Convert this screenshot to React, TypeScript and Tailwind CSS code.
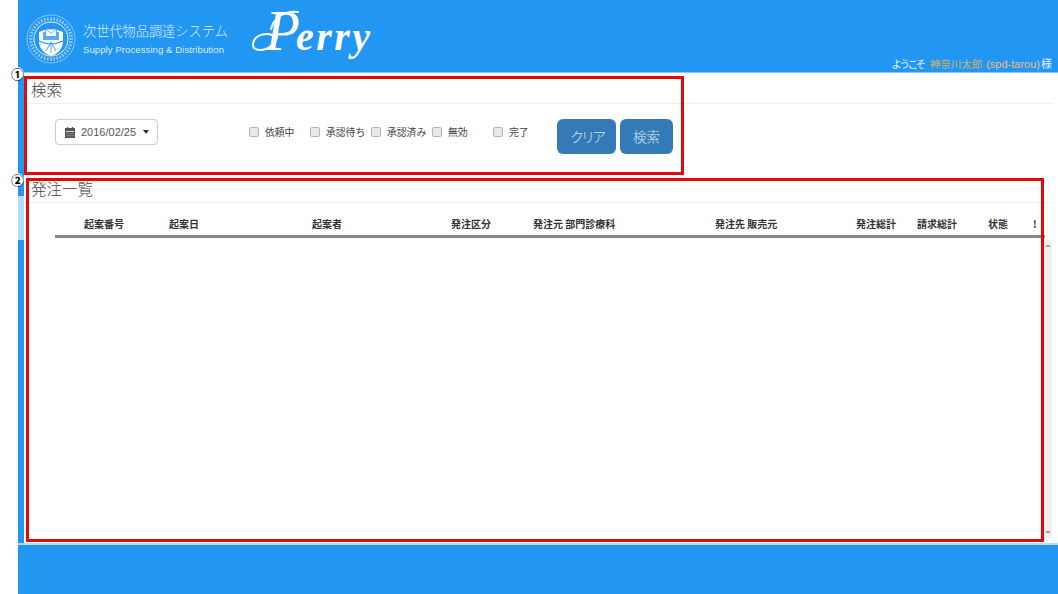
const jp = "font-['Noto_Sans_CJK_JP','Liberation_Sans',sans-serif]"

const statuses = ['依頼中', '承認待ち', '承認済み', '無効', '完了']

const columns = [
  { label: '起案番号', className: 'pl-[29px]' },
  { label: '起案日', className: '' },
  { label: '起案者', className: '' },
  { label: '発注区分', className: '' },
  { label: '発注元 部門診療科', className: '' },
  { label: '発注先 販売元', className: '' },
  { label: '発注総計', className: '' },
  { label: '請求総計', className: '' },
  { label: '状態', className: '' },
  { label: '!', className: '' },
]

function Crest() {
  const ticks = Array.from({ length: 40 }, (_, i) => i * 9)
  return (
    <svg width="50" height="50" viewBox="0 0 50 50" className="shrink-0">
      <circle cx="25" cy="25" r="24" fill="none" stroke="#cfe6fb" strokeWidth="0.6" />
      <g stroke="#d5e9fb" opacity="0.65">
        {ticks.map((deg) => (
          <line key={deg} x1="25" y1="3" x2="25" y2="6.5" strokeWidth="1.6" transform={`rotate(${deg} 25 25)`} />
        ))}
      </g>
      <circle cx="25" cy="25" r="17" fill="none" stroke="#e6f2fd" strokeWidth="1" />
      <path d="M13 18 Q25 12 37 18 L37 29 Q36 38 25 42 Q14 38 13 29 Z" fill="#ffffff" />
      <path d="M17 18 L33 18 L33 26 L17 26 Z" fill="#5aaef0" />
      <rect x="19.5" y="15" width="11" height="7.5" fill="#ffffff" stroke="#2196f3" strokeWidth="0.7" />
      <path d="M19.5 15 L25 19.5 L30.5 15" fill="none" stroke="#2196f3" strokeWidth="0.7" />
      <path d="M13 27 Q25 33 37 27" fill="none" stroke="#2196f3" strokeWidth="1.2" />
      <path d="M25 28 L20 37 M25 28 L30 37 M25 28 L25 39" stroke="#5aaef0" strokeWidth="1.1" />
    </svg>
  )
}

function PerrySwash() {
  return (
    <svg width="60" height="60" viewBox="0 0 60 60" className="absolute left-0 top-0" fill="none">
      <path d="M25 38 C16 30 2 35 1 44 C0 52 14 52 21 44 C24 41 25 39 25 36" stroke="#ffffff" strokeWidth="2" strokeLinecap="round" />
      <path d="M19 29 C22 17 34 10 46 12" stroke="#ffffff" strokeWidth="2" strokeLinecap="round" />
    </svg>
  )
}

function CalendarIcon() {
  return (
    <svg width="10" height="11" viewBox="0 0 10 11" className="shrink-0">
      <rect x="0" y="1" width="10" height="10" fill="#555" />
      <rect x="1" y="4" width="8" height="1" fill="#ddd" />
      <rect x="1" y="6.5" width="8" height="0.7" fill="#999" />
      <rect x="1" y="8.5" width="8" height="0.7" fill="#999" />
      <rect x="2" y="0" width="1.2" height="2" fill="#555" />
      <rect x="6.8" y="0" width="1.2" height="2" fill="#555" />
    </svg>
  )
}

function SectionTitle({ title, height }: { title: string; height: string }) {
  return (
    <div className={`${height} mr-[5px] border-b border-[#eeeeee] pl-[7px] flex items-end pb-[3px]`}>
      <h2 className={`${jp} text-[15.5px] leading-[22px] font-light text-[#444]`}>{title}</h2>
    </div>
  )
}

export default function App() {
  return (
    <div className="relative w-[1058px] h-[594px] overflow-hidden bg-white flex">
      <div className="w-[18px] shrink-0 bg-white" />

      <div className="flex-1 flex flex-col min-w-0">
        <header className="h-[73px] shrink-0 bg-[#2196f3] border-b border-[#8cc6f6] flex relative">
          <div className="pl-[8px] pt-[14px]">
            <Crest />
          </div>
          <div className="pl-[7px] pt-[21px]">
            <div className={`${jp} text-[13.2px] leading-[20px] font-light text-[#dcedfc] whitespace-nowrap`}>
              次世代物品調達システム
            </div>
            <div className="font-['Liberation_Sans',sans-serif] text-[9.5px] leading-[12px] mt-[3px] tracking-[0.1px] text-[#dcedfc] whitespace-nowrap">
              Supply Processing &amp; Distribution
            </div>
          </div>
          <div className="relative ml-[24px] w-[124px] h-[70px] pl-[14px] pt-[3px] flex items-baseline font-['Liberation_Serif',serif] italic text-white">
            <PerrySwash />
            <span className="text-[56px] leading-[56px]">P</span>
            <span className="text-[40px] leading-[40px] font-bold tracking-[2.5px] -ml-[4px]">erry</span>
          </div>
          <div className="ml-auto mr-[6px] self-end pb-[1px] flex items-baseline text-[#e4f1fd] whitespace-nowrap">
            <span className={`${jp} text-[10.5px] leading-[14px] tracking-[-2.4px] mr-[6px]`}>ようこそ</span>
            <span className={`${jp} text-[10.5px] leading-[14px] text-[#d3b25a] mr-[4px]`}>神奈川太郎</span>
            <span className="font-['Liberation_Sans',sans-serif] text-[11px] leading-[14px] text-[#eebb80]">(spd-tarou)</span>
            <span className={`${jp} text-[11px] leading-[14px] ml-[1px]`}>様</span>
          </div>
        </header>

        <div className="flex-1 flex min-h-0">
          <div className="w-[6px] shrink-0 flex flex-col">
            <div className="h-[123px] bg-[#2196f3]" />
            <div className="h-[44px] bg-[#b3dbfb]" />
            <div className="flex-1 bg-[#2196f3]" />
          </div>

          <main className="flex-1 flex flex-col min-w-0">
            <section className="h-[100px] shrink-0">
              <SectionTitle title="検索" height="h-[31px]" />
              <div className="flex items-start pl-[31px] pt-[15px]">
                <button className="w-[103px] h-[26px] rounded-[4px] border border-[#cccccc] bg-white flex items-center pl-[9px] text-[#555]">
                  <CalendarIcon />
                  <span className="font-['Liberation_Sans',sans-serif] text-[11px] ml-[6px]">2016/02/25</span>
                  <span className="ml-[7px] w-0 h-0 border-x-[3.5px] border-x-transparent border-t-[4px] border-t-[#333]" />
                </button>
                <div className="flex ml-[91px] mt-[5px]">
                  {statuses.map((s) => (
                    <label key={s} className="w-[61px] flex items-center h-[16px]">
                      <input
                        type="checkbox"
                        className="appearance-none w-[10px] h-[10px] rounded-[2px] border border-[#b5b5b5] bg-[#e9e9e9] shrink-0"
                      />
                      <span className={`${jp} ml-[6px] text-[9.8px] leading-[14px] text-[#444] whitespace-nowrap`}>{s}</span>
                    </label>
                  ))}
                </div>
                <div className="flex gap-[4px] ml-[3px]">
                  <button className={`${jp} w-[59px] h-[35px] rounded-[6px] bg-[#337ab7] text-[14px] tracking-[-3px] font-light text-[#d5e6f5]`}>クリア</button>
                  <button className={`${jp} w-[53px] h-[35px] rounded-[6px] bg-[#337ab7] text-[13.5px] font-light text-[#d5e6f5]`}>検索</button>
                </div>
              </div>
            </section>

            <section className="flex-1 flex flex-col min-h-0">
              <SectionTitle title="発注一覧" height="h-[30px]" />
              <div className="ml-[31px] mr-[13px] mt-[12px] h-[20px] grid grid-cols-[114px_143px_139px_82px_182px_141px_61px_71px_45px_6px]">
                {columns.map((c) => (
                  <div key={c.label} className={`${jp} ${c.className} text-[10px] leading-[18px] font-bold text-[#333] whitespace-nowrap`}>
                    {c.label}
                  </div>
                ))}
              </div>
              <div className="ml-[31px] mr-[13px] h-[3px] bg-[#888888]" />
              <div className="flex-1 flex justify-end mt-[2px] mb-[5px] mr-[6px]">
                <div className="w-[9px] bg-[#f1f1f1] flex flex-col justify-between items-center py-[4px]">
                  <span className="w-0 h-0 border-x-[3px] border-x-transparent border-b-[3px] border-b-[#a3a3a3]" />
                  <span className="w-0 h-0 border-x-[3px] border-x-transparent border-t-[3px] border-t-[#a3a3a3]" />
                </div>
              </div>
            </section>
          </main>
        </div>

        <footer className="h-[51px] shrink-0 bg-[#2196f3] border-t-2 border-[#b3dbfb]" />
      </div>

      <div className="absolute left-[24px] top-[76px] w-[660px] h-[99px] border-[3px] border-[#e00a0a] pointer-events-none" />
      <div className="absolute left-[26px] top-[178px] w-[1018px] h-[364px] border-[3px] border-[#e00a0a] pointer-events-none" />

      <span className={`${jp} absolute left-[11px] top-[67px] w-[13px] h-[13px] rounded-full bg-white text-[13px] leading-[13px] font-bold text-black text-center`}>①</span>
      <span className={`${jp} absolute left-[11px] top-[173px] w-[13px] h-[13px] rounded-full bg-white text-[13px] leading-[13px] font-bold text-black text-center`}>②</span>
    </div>
  )
}
